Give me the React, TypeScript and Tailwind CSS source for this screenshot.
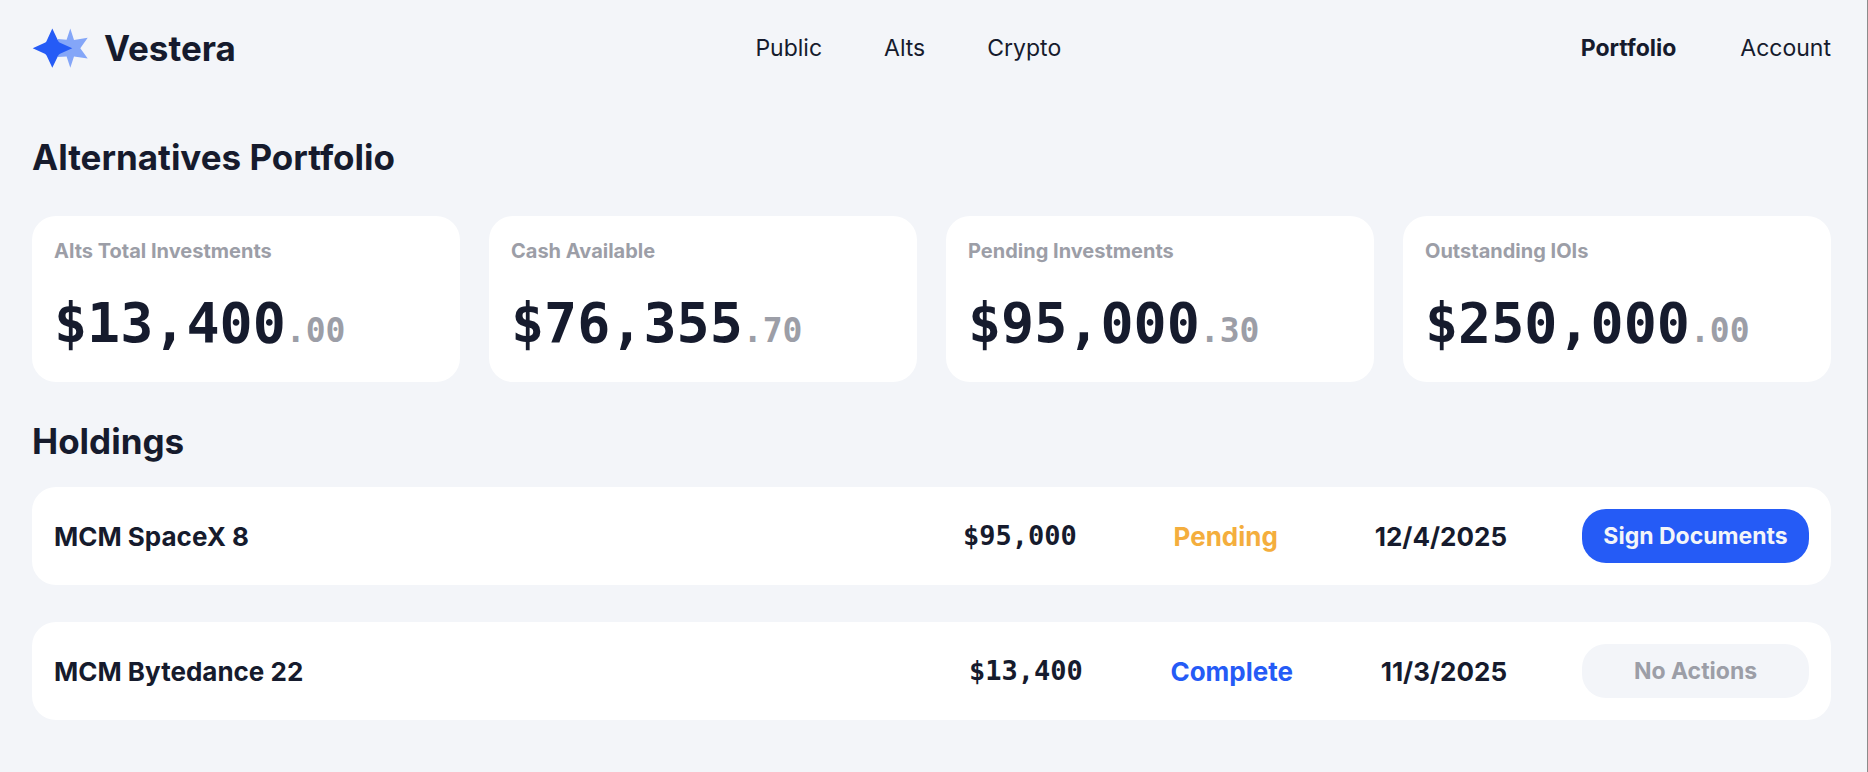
const centerLinks = ["Public", "Alts", "Crypto"];

const stats = [
    { label: "Alts Total Investments", whole: "$13,400", cents: ".00" },
    { label: "Cash Available", whole: "$76,355", cents: ".70" },
    { label: "Pending Investments", whole: "$95,000", cents: ".30" },
    { label: "Outstanding IOIs", whole: "$250,000", cents: ".00" },
];

type Holding = {
    name: string;
    amount: string;
    status: "Pending" | "Complete";
    date: string;
    action?: string;
};

const holdings: Holding[] = [
    { name: "MCM SpaceX 8", amount: "$95,000", status: "Pending", date: "12/4/2025", action: "Sign Documents" },
    { name: "MCM Bytedance 22", amount: "$13,400", status: "Complete", date: "11/3/2025" },
];

const statusColors = {
    Pending: "text-[#f4ae3d]",
    Complete: "text-[#255bf6]",
};

function Logo() {
    return (
        <svg width="56" height="40" viewBox="0 0 56 40" aria-hidden="true">
            <path
                d="M38.3 0.5L42 12L55.7 9.8L48.3 20.2L55.7 30.4L42 28.4L38.3 39.8L34.6 28.6L26 29L26 11L34.6 11.7Z"
                fill="#84a6f8"
            />
            <path
                d="M20.3 0.5L26 12.4Q26.5 14 28 14.7L40.3 20.2L28 25.7Q26.5 26.4 26 28L20.3 39.8L14.8 28Q14.3 26.4 12.8 25.7L0.7 20.2L12.8 14.7Q14.3 14 14.8 12.4Z"
                fill="#255bf6"
            />
        </svg>
    );
}

function Header() {
    return (
        <header className="flex items-center justify-between">
            <a href="#" className="flex items-center gap-4 text-[35px] leading-10 font-bold">
                <Logo />
                Vestera
            </a>
            <nav className="flex gap-[62px] text-[23px] leading-8">
                {centerLinks.map((link) => (
                    <a key={link} href="#">
                        {link}
                    </a>
                ))}
            </nav>
            <nav className="flex gap-16 text-[23px] leading-8">
                <a href="#" className="font-bold">
                    Portfolio
                </a>
                <a href="#">Account</a>
            </nav>
        </header>
    );
}

function StatCard({ label, whole, cents }: { label: string; whole: string; cents: string }) {
    return (
        <div className="rounded-3xl bg-white px-[22px] pt-5 pb-[22px]">
            <h2 className="text-xl leading-[30px] font-bold text-[#9c9ea7]">{label}</h2>
            <p className="mt-5 font-['DejaVu_Sans_Mono',monospace] text-[55px] leading-[74px] font-bold">
                {whole}
                <span className="text-[33px] leading-none text-[#9c9ea7]">{cents}</span>
            </p>
        </div>
    );
}

function HoldingRow({ name, amount, status, date, action }: Holding) {
    return (
        <tr className="flex items-center gap-[75px] rounded-3xl bg-white p-[22px]">
            <th scope="row" className="flex-1 text-left">
                {name}
            </th>
            <td className="font-['DejaVu_Sans_Mono',monospace] text-[27px]">{amount}</td>
            <td className={`w-[148px] text-center ${statusColors[status]}`}>{status}</td>
            <td>{date}</td>
            <td>
                {action ? (
                    <button className="block h-[54px] w-[227px] rounded-3xl bg-[#255bf6] text-[23px] font-bold text-[#f3f5f9]">
                        {action}
                    </button>
                ) : (
                    <button
                        disabled
                        className="block h-[54px] w-[227px] rounded-3xl bg-[#f3f5f9] text-[23px] font-bold text-[#9c9ea7]"
                    >
                        No Actions
                    </button>
                )}
            </td>
        </tr>
    );
}

export default function App() {
    return (
        <div className="min-h-screen border-r border-[#8b8b8b] bg-[#f3f5f9] pt-7 pr-9 pb-[52px] pl-8 font-['Inter',sans-serif] text-[#161b2d]">
            <Header />
            <main>
                <h1 className="mt-[69px] text-[35px] leading-10 font-bold">Alternatives Portfolio</h1>
                <section className="mt-[39px] grid grid-cols-4 gap-[29px]">
                    {stats.map((stat) => (
                        <StatCard key={stat.label} {...stat} />
                    ))}
                </section>

                <h2 className="mt-[39px] text-[35px] leading-10 font-bold">Holdings</h2>
                <table className="mt-[26px] block text-[26px] font-bold">
                    <tbody className="flex flex-col gap-[37px]">
                        {holdings.map((holding) => (
                            <HoldingRow key={holding.name} {...holding} />
                        ))}
                    </tbody>
                </table>
            </main>
        </div>
    );
}
